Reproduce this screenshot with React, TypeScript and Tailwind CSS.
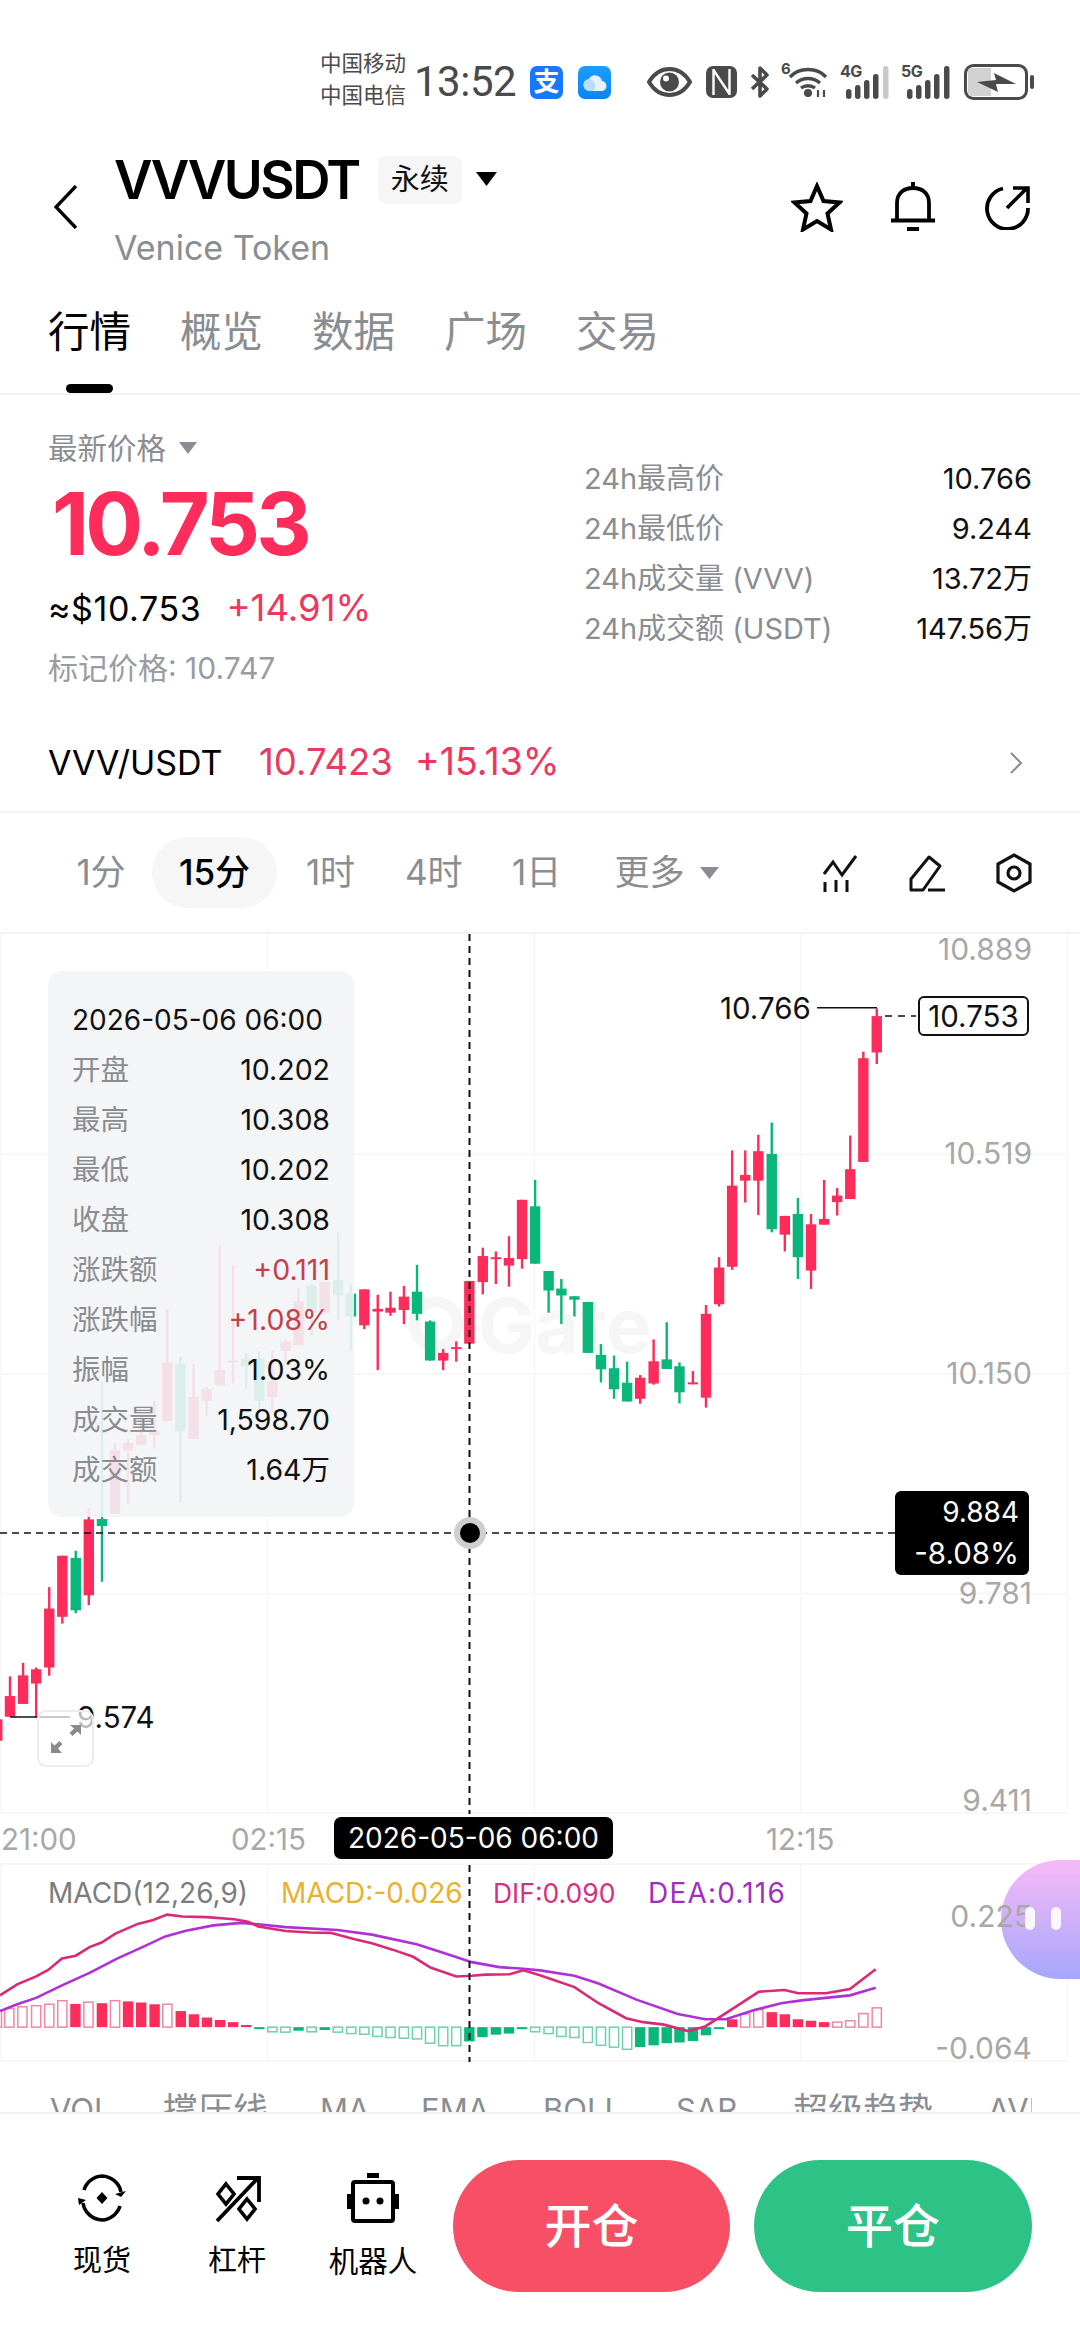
import React from "react";

const X3 = (x: number) => x / 2.904;
const X4 = (x: number) => 540 + x / 2.904;
const Y3 = (y: number) => 930 + y / 2.613;
const Y5 = (y: number) => 1530 + y / 2.8;
const RED = "#fe2c5a";
const GREEN = "#0bb67a";

type C = [number, number, number, number, number, "r" | "g"];
// x centre, wick top, wick bottom, body top, body bottom
const right: C[] = [
  [25, 891, 1000, 891, 942, "g"], [62, 912, 1030, 937, 955, "g"], [100, 957, 1010, 957, 966, "g"],
  [139, 972, 1105, 972, 1105, "g"], [177, 1082, 1182, 1110, 1148, "g"], [215, 1112, 1225, 1145, 1200, "g"],
  [253, 1128, 1232, 1183, 1232, "g"], [291, 1163, 1238, 1170, 1225, "r"], [330, 1070, 1188, 1127, 1185, "r"],
  [368, 1025, 1147, 1122, 1147, "g"], [405, 1130, 1237, 1140, 1208, "g"], [444, 1152, 1187, 1182, 1187, "r"],
  [482, 980, 1248, 1003, 1222, "r"], [520, 855, 984, 882, 978, "r"], [558, 576, 888, 668, 880, "r"],
  [596, 576, 712, 640, 655, "r"], [634, 535, 745, 578, 655, "r"], [673, 503, 790, 585, 782, "g"],
  [711, 747, 840, 747, 796, "r"], [749, 700, 912, 742, 855, "g"], [787, 742, 938, 769, 890, "r"],
  [825, 653, 770, 755, 770, "r"], [863, 674, 746, 694, 711, "r"], [901, 537, 703, 625, 703, "r"],
  [939, 318, 606, 335, 606, "r"], [978, 205, 350, 225, 320, "r"],
];
const mid: C[] = [
  [1554, 653, 872, 722, 872, "g"], [1516, 705, 885, 705, 860, "r"], [1478, 800, 932, 857, 877, "r"],
  [1440, 840, 925, 855, 860, "r"], [1402, 830, 952, 852, 920, "r"],
  [1363, 917, 1081, 917, 1081, "r"], [1325, 1075, 1128, 1090, 1094, "r"], [1287, 1095, 1150, 1105, 1125, "r"],
  [1249, 1020, 1125, 1023, 1125, "g"], [1211, 875, 1020, 945, 1003, "g"], [1173, 930, 1030, 958, 993, "r"],
  [1134, 945, 1008, 987, 1000, "r"], [1097, 953, 1150, 990, 997, "r"], [1058, 939, 1043, 939, 1033, "r"],
  [1019, 925, 1100, 950, 1010, "g"], [982, 790, 1020, 915, 955, "g"], [943, 920, 1000, 920, 1000, "r"],
  [905, 925, 1060, 930, 1000, "g"], [867, 935, 1085, 970, 1085, "r"], [829, 1070, 1130, 1075, 1100, "r"],
  [791, 1100, 1260, 1180, 1220, "r"], [753, 1100, 1260, 1120, 1230, "g"], [715, 1105, 1200, 1120, 1140, "g"],
  [677, 875, 1185, 1125, 1130, "r"], [638, 825, 1190, 1150, 1190, "r"], [600, 1195, 1270, 1200, 1230, "r"],
  [562, 1135, 1330, 1220, 1330, "r"], [524, 1115, 1495, 1133, 1310, "g"], [486, 990, 1283, 1130, 1283, "r"],
  [448, 1230, 1355, 1310, 1320, "r"], [410, 1270, 1345, 1320, 1345, "r"], [372, 1330, 1500, 1340, 1360, "r"],
  [334, 1340, 1525, 1360, 1525, "r"],
];
const low: C[] = [
  [220, 58, 233, 78, 225, "g"], [181, 72, 262, 72, 243, "r"], [143, 160, 408, 220, 385, "r"],
  [105, 385, 525, 390, 430, "r"], [67, 372, 487, 407, 487, "r"], [29, 410, 523, 465, 523, "r"],
  [-8, 530, 590, 530, 590, "r"],
];
const candles = [
  ...right.map((c) => [X4(c[0]), Y3(c[1]), Y3(c[2]), Y3(c[3]), Y3(c[4]), c[5]] as const),
  ...mid.map((c) => [X3(c[0]), Y3(c[1]), Y3(c[2]), Y3(c[3]), Y3(c[4]), c[5]] as const),
  [102, Y3(1180), Y5(145), 1519, 1526, "g"] as const,
  [88.8, Y3(1510), Y5(210), Y3(1540), Y5(183), "r"] as const,
  ...low.map((c) => [X3(c[0]), Y5(c[1]), Y5(c[2]), Y5(c[3]), Y5(c[4]), c[5]] as const),
];

const dif5 = [[0,1303],[50,1272],[105,1250],[140,1232],[180,1200],[220,1192],[260,1168],[295,1155],[335,1130],[400,1103],[445,1092],[485,1077],[530,1082],[600,1084],[680,1090],[720,1097],[750,1110],[830,1123],[900,1127],[960,1128],[1030,1146],[1080,1157],[1140,1175],[1200,1195],[1250,1225],[1325,1250],[1370,1248],[1410,1245],[1480,1244],[1520,1233],[1568,1247]];
const dif6 = [[100,1280],[170,1325],[250,1367],[300,1378],[360,1385],[430,1403],[480,1390],[560,1340],[635,1293],[710,1288],[750,1297],[830,1297],[900,1285],[975,1230]];
const dea5 = [[0,1347],[50,1328],[105,1310],[180,1275],[260,1240],[340,1200],[420,1165],[480,1138],[540,1122],[620,1107],[700,1100],[750,1104],[830,1112],[980,1120],[1080,1133],[1210,1160],[1300,1188],[1370,1210],[1450,1224],[1510,1228],[1568,1233]];
const dea6 = [[100,1248],[170,1270],[280,1315],[400,1355],[480,1370],[540,1370],[620,1345],[700,1325],[760,1317],[900,1303],[975,1282]];
const pts = (a: number[][], b: number[][]) =>
  [...a.map(([x, y]) => `${X3(x)},${Y5(y)}`), ...b.map(([x, y]) => `${X4(x)},${Y5(y)}`)].join(" ");

// x centre, y end, solid?
const hist5: [number, number, number][] = [[-9,1345,0],[27,1340,0],[65,1335,0],[105,1332,0],[143,1328,0],[181,1318,0],[219,1327,1],[257,1322,0],[296,1325,1],[334,1318,0],[372,1320,1],[410,1323,1],[449,1328,1],[486,1328,0],[525,1347,1],[563,1356,1],[601,1365,1],[639,1372,1],[677,1378,1],[715,1386,1],[753,1396,1],[791,1405,0],[829,1406,0],[867,1402,1],[905,1405,0],[943,1400,1],[981,1406,0],[1020,1410,0],[1058,1412,0],[1096,1418,0],[1134,1421,0],[1173,1423,0],[1211,1425,0],[1249,1437,0],[1287,1444,0],[1325,1444,0],[1363,1432,1],[1401,1420,1],[1440,1413,1],[1478,1410,1],[1516,1395,1],[1554,1405,0]];
const hist6: [number, number, number][] = [[25,1410,0],[62,1418,0],[100,1421,0],[139,1435,0],[177,1443,0],[215,1448,0],[253,1454,0],[291,1448,1],[330,1443,1],[368,1437,1],[405,1435,1],[444,1431,1],[482,1415,1],[520,1394,1],[558,1370,1],[596,1355,0],[634,1343,0],[673,1350,1],[711,1356,1],[749,1370,1],[787,1374,1],[825,1378,1],[863,1378,0],[901,1374,0],[939,1354,0],[978,1338,0]];
const hist = [
  ...hist5.map(([x, y, s]) => [X3(x), y, s] as const),
  ...hist6.map(([x, y, s]) => [X4(x), y, s] as const),
];

function ChartSvg() {
  const base = Y5(1392);
  return (
    <svg className="absolute left-0 top-0" width={1080} height={1128} viewBox="0 934 1080 1128">
      {[1154.5, 1374, 1593.6, 1813, 1864, 2061].map((y) => (
        <line key={y} x1={0} x2={1067} y1={y} y2={y} stroke="#f4f5f6" strokeWidth={1.5} />
      ))}
      {[1, 267.5, 534.5, 800.7, 1067.5].map((x) => (
        <g key={x}>
          <line x1={x} x2={x} y1={934} y2={1813} stroke="#f6f7f8" strokeWidth={1.5} />
          <line x1={x} x2={x} y1={1865} y2={2061} stroke="#f6f7f8" strokeWidth={1.5} />
        </g>
      ))}
      <g fill="#f6f6f6">
        <circle cx={436} cy={1324} r={22} fill="none" stroke="#f6f6f6" strokeWidth={11} />
        <text x={478} y={1353} fontSize={76} fontWeight={700} fontFamily="Inter, sans-serif">Gate</text>
      </g>
      {candles.map((c, i) => {
        const col = c[5] === "r" ? RED : GREEN;
        return (
          <g key={i}>
            <rect x={c[0] - 1.2} y={c[1]} width={2.4} height={c[2] - c[1]} fill={col} />
            <rect x={c[0] - 5.2} y={c[3]} width={10.4} height={Math.max(c[4] - c[3], 2)} fill={col} />
          </g>
        );
      })}
      <line x1={817} x2={877} y1={1007.7} y2={1007.7} stroke="#111" strokeWidth={1.6} />
      <line x1={885} x2={916} y1={1016} y2={1016} stroke="#111" strokeWidth={1.6} strokeDasharray="7 6" />
      <line x1={10} x2={70} y1={1717} y2={1717} stroke="#111" strokeWidth={1.6} />
      {hist.map(([x, y, s], i) => {
        const up = y < 1392;
        const end = Y5(y);
        const top = Math.min(end, base);
        const h = Math.max(Math.abs(end - base), 2);
        const col = up ? RED : GREEN;
        return s ? (
          <rect key={i} x={x - 5.2} y={top} width={10.4} height={h} fill={col} />
        ) : (
          <rect key={i} x={x - 4.6} y={top} width={9.2} height={h} fill="#fff" stroke={up ? "#f287a0" : "#6fcfae"} strokeWidth={1.5} />
        );
      })}
      <polyline points={pts(dea5, dea6)} fill="none" stroke="#b030d8" strokeWidth={2.6} />
      <polyline points={pts(dif5, dif6)} fill="none" stroke="#d92a78" strokeWidth={2.6} />
      <line x1={469.5} x2={469.5} y1={934} y2={1814} stroke="#111" strokeWidth={2} strokeDasharray="7 5" />
      <line x1={469.5} x2={469.5} y1={1865} y2={2062} stroke="#111" strokeWidth={2} strokeDasharray="7 5" />
      <line x1={0} x2={896} y1={1533} y2={1533} stroke="#111" strokeWidth={1.6} strokeDasharray="7 5" />
      <circle cx={470} cy={1533} r={16} fill="#cfcfcf" />
      <circle cx={470} cy={1533} r={10} fill="#000" />
    </svg>
  );
}

function Triangle({ className }: { className: string }) {
  return (
    <svg className={className} viewBox="0 0 20 14" preserveAspectRatio="none">
      <polygon points="0,0 20,0 10,14" fill="currentColor" />
    </svg>
  );
}

function Bars({ label, last }: { label: string; last: string }) {
  return (
    <div className="relative ml-[10px] h-[34px] w-[50px]">
      <span className="absolute left-0 top-[-3px] text-[16px] font-bold leading-[18px] tracking-[-0.5px]">{label}</span>
      <svg className="absolute left-0 top-0" width="50" height="34" viewBox="0 0 50 34">
        <rect x="6" y="24" width="5.500" height="10" rx="2.700" fill="#4a4a4a" />
        <rect x="15" y="20" width="5.500" height="14" rx="2.700" fill="#4a4a4a" />
        <rect x="24" y="15" width="5.500" height="19" rx="2.700" fill="#4a4a4a" />
        <rect x="33" y="9" width="5.500" height="25" rx="2.700" fill="#4a4a4a" />
        <rect x="43" y="1" width="5.500" height="33" rx="2.700" fill={last} />
      </svg>
    </div>
  );
}

function StatusBar() {
  return (
    <div className="h-[120px] pl-[320px] pt-[47px]">
      <div className="flex h-[70px] items-center text-[#4a4a4a]">
        <div className="mb-[6px] flex w-[90px] flex-col text-[21.5px] leading-[32px]">
          <span>中国移动</span>
          <span>中国电信</span>
        </div>
        <span className="ml-[4px] w-[113px] text-[42px] leading-none tracking-[-0.5px]" style={{ fontFamily: "Roboto, sans-serif" }}>13:52</span>
        <div className="ml-[3px] flex h-[33px] w-[33px] items-center justify-center rounded-[7px] bg-[#1677ff] text-[26px] font-bold leading-none text-white">支</div>
        <div className="ml-[15px] flex h-[33px] w-[33px] items-center justify-center rounded-[7px] bg-gradient-to-b from-[#1b9dff] to-[#0a84f5]">
          <svg width="24" height="20" viewBox="0 0 24 20"><path d="M7 19a6 6 0 0 1-1-12 7 7 0 0 1 13 2 5 5 0 0 1-1 10z" fill="#e6f3ff" /><path d="M7 19a6 6 0 0 1-1-12 6 6 0 0 1 5 3c2 3 1 7-1 9z" fill="#b9dcfb" /></svg>
        </div>
        <svg className="ml-[36px]" width="45" height="30" viewBox="0 0 45 30">
          <path d="M2 15C8 5 15 2 22.500 2S37 5 43 15c-6 10-13 13-20.500 13S8 25 2 15z" fill="none" stroke="#4a4a4a" strokeWidth="4" />
          <circle cx="22.500" cy="15" r="9.500" fill="#4a4a4a" />
          <circle cx="19" cy="11.500" r="3" fill="#fff" />
        </svg>
        <svg className="ml-[14px]" width="31" height="32" viewBox="0 0 31 32">
          <rect x="0" y="0" width="31" height="32" rx="7" fill="#4a4a4a" />
          <path d="M7.500 3v26M7.500 4l16 24M23.500 3v26" fill="none" stroke="#fff" strokeWidth="2.400" />
        </svg>
        <svg className="ml-[12px]" width="22" height="32" viewBox="0 0 22 32">
          <path d="M3 9l15 14-7 7V2l7 7L3 23" fill="none" stroke="#4a4a4a" strokeWidth="3.600" strokeLinejoin="round" />
        </svg>
        <div className="relative ml-[10px] h-[32px] w-[49px]">
          <span className="absolute left-0 top-[-6px] text-[15px] font-bold leading-[18px]">6</span>
          <svg className="absolute left-[7px] top-0" width="42" height="32" viewBox="0 0 42 32">
            <path d="M2 11C11 1 29 1 38 11M8 17c7-6 17-6 24 0M13 22c4-3 10-3 14 0" fill="none" stroke="#4a4a4a" strokeWidth="3.400" />
            <circle cx="20" cy="27" r="4" fill="#4a4a4a" />
            <path d="M30 31v-7M36 24v7" stroke="#4a4a4a" strokeWidth="2.200" />
          </svg>
        </div>
        <Bars label="4G" last="#c9c9c9" />
        <div className="w-[1px]" />
        <Bars label="5G" last="#4a4a4a" />
        <svg className="ml-[13px]" width="70" height="36" viewBox="0 0 70 36">
          <rect x="1.500" y="1.500" width="61" height="33" rx="8" fill="#fff" stroke="#4a4a4a" strokeWidth="3" />
          <path d="M6 4h21v28H6a3 3 0 0 1-2-3V7a3 3 0 0 1 2-3z" fill="#d2d2d2" />
          <path d="M13 18l19-2-2-7 22 11-20 0 2 8z" fill="#4a4a4a" />
          <rect x="66" y="11" width="4" height="14" rx="2" fill="#4a4a4a" />
        </svg>
      </div>
    </div>
  );
}

function Header() {
  return (
    <div className="flex h-[150px] pl-[54px] pr-[49px] pt-[30px]">
      <svg className="mt-[35px] shrink-0" width="24" height="44" viewBox="0 0 24 44">
        <path d="M22 1L2 22l20 21" fill="none" stroke="#000" strokeWidth="3.400" />
      </svg>
      <div className="ml-[36px] flex flex-col">
        <div className="flex h-[60px] items-center">
          <span className="text-[53px] font-semibold leading-[60px] tracking-[-2.500px] text-black">VVVUSDT</span>
          <span className="ml-[19px] flex h-[48px] w-[84px] items-center justify-center rounded-[8px] bg-[#f6f6f6] text-[29px] text-[#111]">永续</span>
          <Triangle className="ml-[14px] mb-[3px] h-[14px] w-[21px] text-black" />
        </div>
        <div className="mt-[16px] text-[34px] leading-[44px] text-[#8a8d91]">Venice Token</div>
      </div>
      <svg className="ml-auto mt-[32px]" width="52" height="50" viewBox="0 0 52 50">
        <path d="M26 4l6.500 15 16 1.500-12 11 3.500 16L26 39l-14 8.500 3.500-16-12-11 16-1.500z" fill="none" stroke="#000" strokeWidth="4" strokeLinejoin="miter" />
      </svg>
      <svg className="ml-[48px] mt-[32px]" width="44" height="50" viewBox="0 0 44 50">
        <path d="M6 38V21C6 12 12 6 22 6s16 6 16 15v17" fill="none" stroke="#000" strokeWidth="3.800" />
        <path d="M0 38.500h44" stroke="#000" strokeWidth="4" />
        <path d="M22 0v6M16 47h12" stroke="#000" strokeWidth="4" />
      </svg>
      <svg className="ml-[50px] mt-[36px]" width="46" height="44" viewBox="0 0 46 44">
        <path d="M43 22A20.500 20.500 0 1 1 18 2.500" fill="none" stroke="#000" strokeWidth="3.800" />
        <path d="M22 22L41 3M28 2h15v15" fill="none" stroke="#000" strokeWidth="3.600" />
      </svg>
    </div>
  );
}

function Tabs() {
  return (
    <div className="h-[125px] border-b-2 border-[#f2f3f5] pl-[48px] pt-[34px]">
      <div className="flex items-start gap-[49px] text-[41.500px] leading-[56px] text-[#8a8d91]">
        <div className="flex w-[83px] flex-col items-center text-black">
          <span>行情</span>
          <span className="mt-[24px] h-[9px] w-[47px] rounded-full bg-black" />
        </div>
        <span>概览</span>
        <span>数据</span>
        <span>广场</span>
        <span>交易</span>
      </div>
    </div>
  );
}

function Price() {
  const rows = [
    ["24h最高价", "10.766"],
    ["24h最低价", "9.244"],
    ["24h成交量 (VVV)", "13.72万"],
    ["24h成交额 (USDT)", "147.56万"],
  ];
  return (
    <div className="flex h-[319px] pl-[48px] pr-[48px]">
      <div className="flex w-[536px] flex-col pt-[31px]">
        <div className="flex h-[44px] items-center text-[29.500px] text-[#8a8d91]">
          最新价格
          <Triangle className="ml-[13px] h-[12px] w-[18px]" />
        </div>
        <div className="mt-[4px] pl-[4px] text-[86px] font-bold leading-[100px] tracking-[-3.800px] text-[#fe2c5a]">10.753</div>
        <div className="mt-[12px] flex h-[44px] items-center text-[34px]">
          <span className="text-black tracking-[0.6px]">≈$10.753</span>
          <span className="ml-[25px] text-[36.500px] text-[#f0365f]">+14.91%</span>
        </div>
        <div className="mt-[18px] text-[30px] leading-[40px] text-[#999ca0]">标记价格: 10.747</div>
      </div>
      <div className="flex flex-1 flex-col pt-[59px]">
        {rows.map(([k, v]) => (
          <div key={k} className="flex h-[50px] items-center justify-between text-[29px]">
            <span className="text-[#8a8d91]">{k}</span>
            <span className="text-[#111]">{v}</span>
          </div>
        ))}
      </div>
    </div>
  );
}

function PairRow() {
  return (
    <div className="flex h-[99px] items-center border-b-2 border-[#f2f3f5] pl-[48px] pr-[57px] text-[34px]">
      <span className="w-[211px] text-black">VVV/USDT</span>
      <span className="w-[156px] text-[36.500px] text-[#e93a62]">10.7423</span>
      <span className="text-[37.500px] text-[#f0365f]">+15.13%</span>
      <svg className="ml-auto" width="13" height="22" viewBox="0 0 13 22">
        <path d="M1 1l10 10L1 21" fill="none" stroke="#8a8d91" strokeWidth="2" />
      </svg>
    </div>
  );
}

function Intervals() {
  return (
    <div className="flex h-[121px] items-center border-b-2 border-[#f2f3f5] pl-[75px] pr-[48px] text-[35px] text-[#8a8d91]">
      <span className="w-[52px] whitespace-nowrap text-center">1分</span>
      <span className="ml-[25px] flex h-[71px] w-[125px] items-center justify-center rounded-full bg-[#f6f6f6] font-medium text-black">15分</span>
      <span className="ml-[28px] w-[51px] whitespace-nowrap text-center">1时</span>
      <span className="ml-[49px] w-[55px] whitespace-nowrap text-center">4时</span>
      <span className="ml-[52px] w-[48px] whitespace-nowrap text-center">1日</span>
      <span className="ml-[54px] w-[71px] whitespace-nowrap text-center">更多</span>
      <Triangle className="ml-[15px] h-[12px] w-[19px]" />
      <svg className="ml-auto" width="36" height="38" viewBox="0 0 36 38">
        <path d="M2 20L11 8l9 13L34 2" fill="none" stroke="#111" strokeWidth="3" />
        <path d="M3 28v10M14 26v12M25 26v12" stroke="#111" strokeWidth="3" />
      </svg>
      <svg className="ml-[50px]" width="38" height="38" viewBox="0 0 38 38">
        <path d="M3 36V25L21 3l11 9-17 24z" fill="none" stroke="#111" strokeWidth="3" strokeLinejoin="round" />
        <path d="M20 36h17" stroke="#111" strokeWidth="3" />
      </svg>
      <svg className="ml-[50px]" width="36" height="40" viewBox="0 0 36 40">
        <path d="M18 2l16 9v18l-16 9-16-9V11z" fill="none" stroke="#111" strokeWidth="3.200" />
        <circle cx="18" cy="20" r="6" fill="none" stroke="#111" strokeWidth="3.200" />
      </svg>
    </div>
  );
}

function Tooltip() {
  const rows = [
    ["开盘", "10.202", ""],
    ["最高", "10.308", ""],
    ["最低", "10.202", ""],
    ["收盘", "10.308", ""],
    ["涨跌额", "+0.111", "r"],
    ["涨跌幅", "+1.08%", "r"],
    ["振幅", "1.03%", ""],
    ["成交量", "1,598.70", ""],
    ["成交额", "1.64万", ""],
  ];
  return (
    <div className="absolute left-[48px] top-[37px] h-[546px] w-[306px] rounded-[14px] bg-[#f3f4f6]/90 pl-[24px] pr-[24px] pt-[24px] text-[28.500px] leading-[50px]">
      <div className="h-[50px] whitespace-nowrap text-[28px] text-[#111]">2026-05-06 06:00</div>
      {rows.map(([k, v, c]) => (
        <div key={k} className="flex h-[50px] justify-between">
          <span className="text-[#8a8d91]">{k}</span>
          {c ? <span className="text-[#c4414c]">{v}</span> : <span className="text-[#111]">{v}</span>}
        </div>
      ))}
    </div>
  );
}

function Chart() {
  const axis = "absolute right-[48px] -translate-y-1/2 text-[30px] leading-[36px] text-[#a8a8a8]";
  return (
    <div className="relative h-[1178px] overflow-hidden">
      <ChartSvg />
      <div className="h-[880px]" />
      <div className="relative flex h-[50px] items-center text-[29.500px] text-[#a8a8a8]">
        <span className="ml-[1px] w-[190px] whitespace-nowrap">21:00</span>
        <span className="w-[575px] whitespace-nowrap pl-[40px]">02:15</span>
        <span className="whitespace-nowrap">12:15</span>
      </div>
      <div className="relative flex h-[198px] items-start pl-[48px] pt-[11px] text-[28px] leading-[36px]">
        <span className="w-[233px] whitespace-nowrap text-[#7a7c80]">MACD(12,26,9)</span>
        <span className="w-[212px] whitespace-nowrap text-[#eab12e]">MACD:-0.026</span>
        <span className="w-[155px] whitespace-nowrap text-[26.500px] text-[#d6307f]">DIF:0.090</span>
        <span className="whitespace-nowrap tracking-[1.200px] text-[#a02fc0]">DEA:0.116</span>
      </div>
      <div className="w-[1032px] overflow-hidden bg-white">
        <div className="flex h-[50px] whitespace-nowrap pl-[50px] pt-[28px] text-[31px] leading-[40px] text-[#8a8d91]">
          <span className="w-[113px] shrink-0">VOL</span>
          <span className="w-[157px] shrink-0 text-[35px]">撑压线</span>
          <span className="w-[101px] shrink-0">MA</span>
          <span className="w-[122px] shrink-0">EMA</span>
          <span className="w-[133px] shrink-0">BOLL</span>
          <span className="w-[117px] shrink-0">SAR</span>
          <span className="w-[195px] shrink-0 text-[35px]">超级趋势</span>
          <span className="shrink-0">AVL</span>
        </div>
      </div>

      <Tooltip />

      <div className="absolute left-[1001px] top-[926px] h-[119px] w-[79px] rounded-l-full bg-gradient-to-b from-[#f7b9f6] to-[#a5a6fb]" />

      <span className={`${axis} top-[15px]`}>10.889</span>
      <span className={`${axis} top-[219px]`}>10.519</span>
      <span className={`${axis} top-[439px]`}>10.150</span>
      <span className={`${axis} top-[659px]`}>9.781</span>
      <span className={`${axis} top-[866px]`}>9.411</span>
      <span className={`${axis} top-[982px]`}>0.225</span>
      <span className={`${axis} top-[1114px]`}>-0.064</span>

      <div className="absolute left-[1025px] top-[973px] flex gap-[16px]">
        <span className="h-[23px] w-[10px] rounded-full bg-white/90" />
        <span className="h-[23px] w-[10px] rounded-full bg-white/90" />
      </div>

      <span className="absolute left-[720px] top-[74px] -translate-y-1/2 text-[29.500px] leading-[36px] text-[#111]">10.766</span>
      <span className="absolute left-[77px] top-[783px] -translate-y-1/2 text-[29.500px] leading-[36px] text-[#111]">9.574</span>
      <div className="absolute left-[918px] top-[62px] flex h-[40px] w-[111px] items-center justify-center rounded-[6px] border-2 border-[#111] bg-white text-[29.500px] text-[#111]">10.753</div>
      <div className="absolute left-[895px] top-[557px] flex h-[84px] w-[134px] flex-col items-end justify-center rounded-[6px] bg-black pr-[10px] text-[29.500px] leading-[41px] text-white">
        <span className="text-[28px]">9.884</span>
        <span>-8.08%</span>
      </div>
      <div className="absolute left-[334px] top-[883px] flex h-[42px] w-[279px] items-center justify-center rounded-[7px] bg-black text-[28px] text-white">2026-05-06 06:00</div>

      <div className="absolute left-[37px] top-[776px] flex h-[57px] w-[57px] items-center justify-center rounded-[9px] border-2 border-[#ececec] bg-white/70">
        <svg width="30" height="28" viewBox="0 0 30 28">
          <path d="M19 0h11v10l-3.500-3.500-5 4.500-3-3 4.500-4.500zM11 28H0V17l3.500 3.500 5-4.500 3 3-4.500 4.500z" fill="#8a8a8a" />
        </svg>
      </div>
    </div>
  );
}

function Footer() {
  return (
    <div className="flex h-[228px] border-t-2 border-[#f0f2f4] pl-[52px] pt-[46px]">
      <div className="flex w-[100px] flex-col items-center pt-[13px]">
        <svg width="50" height="50" viewBox="0 0 50 50">
          <path d="M7 17A20 20 0 0 1 25 3a20 20 0 0 1 19 16M43 33a20 20 0 0 1-18 14A20 20 0 0 1 6 30" fill="none" stroke="#000" strokeWidth="3.600" />
          <path d="M38 21l6 3 5-6zM2 32l-1-7 8 2z" fill="#000" />
          <path d="M25 19l5.500 6-5.500 6-5.500-6z" fill="#000" />
        </svg>
        <span className="mt-[20px] text-[29px] leading-[36px] text-black">现货</span>
      </div>
      <div className="ml-[35px] flex w-[100px] flex-col items-center pt-[13px]">
        <svg width="48" height="50" viewBox="0 0 48 50">
          <path d="M4 48L44 6M24 5h22v24" fill="none" stroke="#000" strokeWidth="3.800" />
          <path d="M13 11l8 10-8 10-8-10zM34 26l8 10-8 10-8-10z" fill="none" stroke="#000" strokeWidth="3.600" />
        </svg>
        <span className="mt-[20px] text-[29px] leading-[36px] text-black">杠杆</span>
      </div>
      <div className="ml-[36px] flex w-[100px] flex-col items-center pt-[13px]">
        <svg width="52" height="50" viewBox="0 0 52 50">
          <rect x="20" y="0" width="12" height="5" fill="#000" />
          <rect x="6" y="9" width="40" height="39" rx="2" fill="none" stroke="#000" strokeWidth="4" />
          <rect x="0" y="21" width="5" height="15" fill="#000" />
          <rect x="47" y="21" width="5" height="15" fill="#000" />
          <circle cx="19" cy="28" r="3.500" fill="#000" />
          <circle cx="33" cy="28" r="3.500" fill="#000" />
        </svg>
        <span className="mt-[20px] whitespace-nowrap text-[29.500px] leading-[36px] text-black">机器人</span>
      </div>
      <button className="ml-[30px] h-[132px] w-[277px] rounded-full bg-[#f74f65] text-[47px] font-medium text-white">开仓</button>
      <button className="ml-[24px] h-[132px] w-[278px] rounded-full bg-[#2dc386] text-[47px] font-medium text-white">平仓</button>
    </div>
  );
}

export default function App() {
  return (
    <div
      className="h-[2340px] w-[1080px] overflow-hidden bg-white"
      style={{ fontFamily: 'Inter, "Noto Sans CJK SC", sans-serif' }}
    >
      <StatusBar />
      <Header />
      <Tabs />
      <Price />
      <PairRow />
      <Intervals />
      <Chart />
      <Footer />
    </div>
  );
}
